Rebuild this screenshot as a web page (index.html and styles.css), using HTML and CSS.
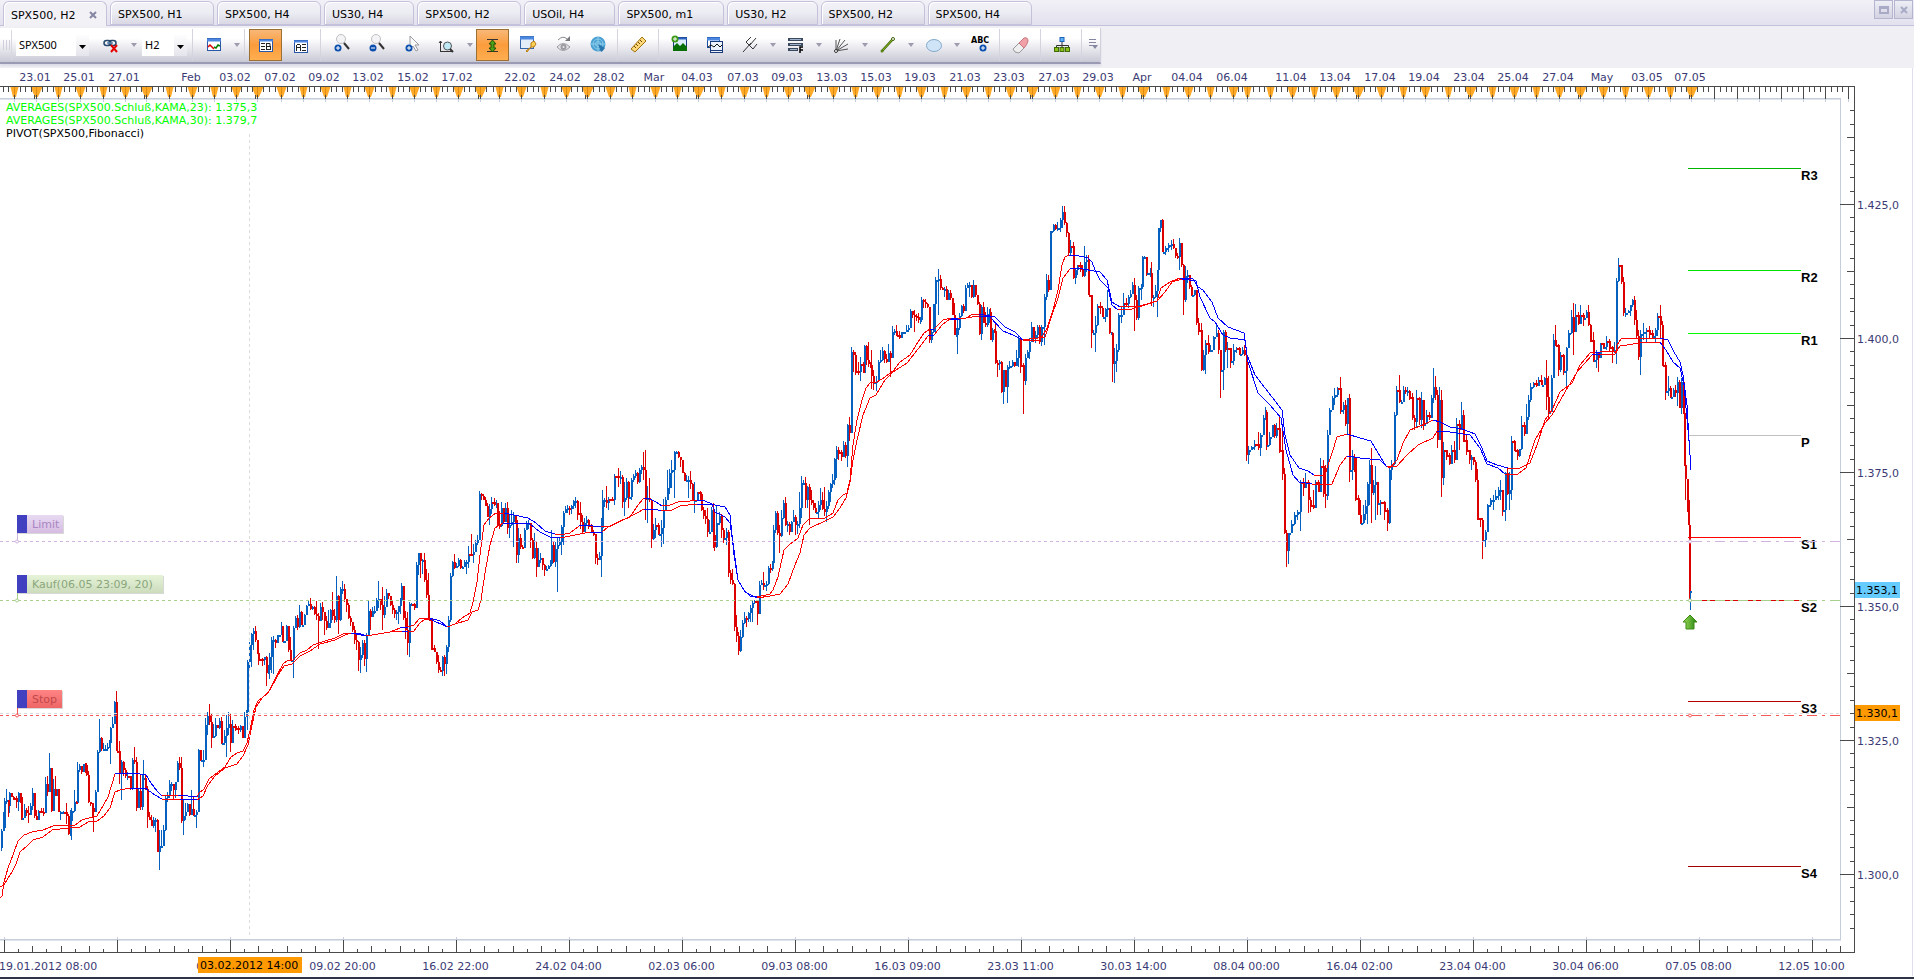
FILE: index.html
```
<!DOCTYPE html>
<html lang="de">
<head>
  <meta charset="UTF-8">
  <meta name="viewport" content="width=device-width, initial-scale=1.0">
  <title>SPX500, H2</title>
  <link rel="stylesheet" href="styles.css">
</head>
<body>

  <header class="tab-bar">
    <nav class="tabs">
      <button class="tab index active">SPX500, H2 <svg class="tab-close" viewBox="0 0 8 8"><path d="M1 1l6 6M7 1L1 7"/></svg></button>
      <button class="tab index">SPX500, H1</button>
      <button class="tab index">SPX500, H4</button>
      <button class="tab">US30, H4</button>
      <button class="tab index">SPX500, H2</button>
      <button class="tab">USOil, H4</button>
      <button class="tab index">SPX500, m1</button>
      <button class="tab">US30, H2</button>
      <button class="tab index">SPX500, H2</button>
      <button class="tab index">SPX500, H4</button>
    </nav>
    <div class="window-buttons">
      <button aria-label="Maximieren"><svg viewBox="0 0 10 10"><path d="M1 2h8v6H1z"/><path d="M1 3h8"/></svg></button>
      <button aria-label="Schließen"><svg viewBox="0 0 10 10"><path d="M2 2l6 6M8 2L2 8"/></svg></button>
    </div>
  </header>

  <div class="toolbar-row">
    <div class="toolbar">
      <span class="grip"></span>
      <span class="combo symbol">
        <select aria-label="Symbol"><option>SPX500</option><option>US30</option><option>USOil</option></select>
        <svg viewBox="0 0 13 20"><path d="M3 10h7l-3.500 4z"/></svg>
      </span>
      <button class="tool" aria-label="Verknüpfung"><svg viewBox="0 0 24 24">
        <g fill="none" stroke="#25476b" stroke-width="1.500"><rect x="5" y="7.500" width="7" height="5" rx="2.500"/><rect x="10" y="7.500" width="7" height="5" rx="2.500"/></g>
        <path d="M8 10h6" stroke="#5f86b0" stroke-width="1.500"/><path d="M12 12l6 7M18 12l-6 7" stroke="#e60000" stroke-width="2"/></svg></button>
      <button class="drop" aria-label="Mehr"></button>
      <span class="combo period">
        <select aria-label="Periode"><option>H2</option><option>H1</option><option>H4</option><option>m1</option></select>
        <svg viewBox="0 0 13 20"><path d="M3 10h7l-3.500 4z"/></svg>
      </span>
      <span class="sep wide"></span>
      <button class="tool" aria-label="Chart"><svg viewBox="0 0 24 24">
        <rect x="5.500" y="5.500" width="13" height="12" fill="#fff" stroke="#2a57a8"/><path d="M5 7h14" stroke="#4b86e0" stroke-width="3"/>
        <path d="M6 14l2-2 2 2 2 2" fill="none" stroke="#e00000" stroke-width="1.500"/><path d="M12 14l2 1 2-3 2 1" fill="none" stroke="#008000" stroke-width="1.500"/></svg></button>
      <button class="drop" aria-label="Mehr"></button>
      <span class="sep"></span>
      <button class="tool on" aria-label="Bid"><svg viewBox="0 0 24 24">
        <rect x="5.500" y="6.500" width="13" height="12" fill="#fff" stroke="#2a57a8"/><path d="M5 7.500h14" stroke="#4b86e0" stroke-width="2"/>
        <path d="M7 10.500h4M7 13.500h4M7 16.500h4M12.500 10v7M12 10.500h4v3h-4M16.500 13v4M12 16.500h4" fill="none" stroke="#222"/></svg></button>
      <button class="tool" aria-label="Ask"><svg viewBox="0 0 24 24">
        <rect x="5.500" y="7.500" width="13" height="12" fill="#fff" stroke="#2a57a8"/><path d="M5 8.500h14" stroke="#4b86e0" stroke-width="2"/>
        <path d="M7.500 18v-6M11.500 18v-6M8 11.500h3M8 14.500h3M13 11.500h4M13 14.500h4M13 17.500h4" fill="none" stroke="#222"/></svg></button>
      <span class="sep"></span>
      <button class="tool" aria-label="Vergrößern"><svg viewBox="0 0 24 24">
        <circle cx="11" cy="6" r="4.500" fill="#f4f4f6" stroke="#c0c0c4"/><path d="M14 10l5 6" stroke="#333" stroke-width="2"/>
        <circle cx="8" cy="15" r="3.500" fill="#0a4fae"/><path d="M6 15h4M8 13v4" stroke="#fff"/></svg></button>
      <button class="tool" aria-label="Verkleinern"><svg viewBox="0 0 24 24">
        <circle cx="11" cy="6" r="4.500" fill="#f4f4f6" stroke="#c0c0c4"/><path d="M14 10l5 6" stroke="#333" stroke-width="2"/>
        <circle cx="8" cy="15" r="3.500" fill="#0a4fae"/><path d="M6 15h4" stroke="#fff"/></svg></button>
      <button class="tool" aria-label="Zeiger"><svg viewBox="0 0 24 24">
        <path d="M10 3v13l3-3 3 5 2-1-3-5h4z" fill="#fafafa" stroke="#9a9aa0"/>
        <circle cx="9" cy="15" r="3.500" fill="#0a4fae"/><path d="M7 15h4M9 13v4" stroke="#fff"/></svg></button>
      <button class="tool" aria-label="Bereich"><svg viewBox="0 0 24 24">
        <path d="M5.500 8v10M4 10l1.500-2L7 10M5 18.500h13" fill="none" stroke="#333"/><circle cx="12.500" cy="13" r="4" fill="#bfeaf6" stroke="#555"/><path d="M15 16l3 3" stroke="#333" stroke-width="2"/></svg></button>
      <button class="drop" aria-label="Mehr"></button>
      <button class="tool on" aria-label="Skalieren"><svg viewBox="0 0 24 24">
        <path d="M6 6.500h11M6 18.500h11" stroke="#333"/><path d="M11.500 7l3.500 4h-2v4h2l-3.500 4L8 15h2v-4H8z" fill="#4ea01a" stroke="#1d5200"/></svg></button>
      <button class="tool" aria-label="Notiz"><svg viewBox="0 0 24 24">
        <rect x="4.500" y="3.500" width="13" height="12" fill="#e4eefa" stroke="#3765a8"/><path d="M4 5h14" stroke="#4b86e0" stroke-width="3"/>
        <path d="M10 18l5-4v-4l3-2 2 3-2 3h-3l-4 5z" fill="#ffd257" stroke="#b87a10"/></svg></button>
      <button class="tool" aria-label="Anzeigen"><svg viewBox="0 0 24 24">
        <path d="M6 14q6-7 13 0q-7 7-13 0z" fill="#e4e4e8" stroke="#9a9aa0"/><circle cx="12.500" cy="14" r="3" fill="#9a9aa0"/><circle cx="12.500" cy="14" r="1" fill="#eee"/>
        <path d="M7 7q5-5 9-1" fill="none" stroke="#85858c"/><path d="M14 8h5V3z" fill="#77777e"/></svg></button>
      <button class="tool" aria-label="Web"><svg viewBox="0 0 24 24">
        <circle cx="12" cy="11" r="7.500" fill="#4aa0d2"/><g fill="none" stroke="#8ccdea"><circle cx="12" cy="11" r="5"/><circle cx="12" cy="11" r="2.500"/><path d="M12 4v14M5 11h14"/></g><path d="M12 11l7 4q-2 3-4 4z" fill="#2875ae"/></svg></button>
      <span class="sep"></span>
      <button class="tool" aria-label="Lineal"><svg viewBox="0 0 24 24">
        <path d="M4 16L15 4l4 4L8 19z" fill="#ffd979" stroke="#a0720e"/><path d="M7 13l2 2M9 11l2 2M11 9l2 2M13 7l2 2" stroke="#704c00"/></svg></button>
      <span class="sep"></span>
      <button class="tool" aria-label="Bild"><svg viewBox="0 0 24 24">
        <rect x="5.500" y="4.500" width="13" height="13" fill="#dceefc" stroke="#173a78"/><path d="M5 5.500h14" stroke="#2e62c0" stroke-width="2"/><path d="M5 18v-4l4-4 3 3 3-3 4 4v4z" fill="#067006"/>
        <circle cx="7" cy="6" r="3.500" fill="#3c9a18"/><path d="M5 6h4M7 4v4" stroke="#fff"/></svg></button>
      <button class="tool" aria-label="Fenster"><svg viewBox="0 0 24 24">
        <rect x="4.500" y="4.500" width="12" height="10" fill="#fff" stroke="#1d4e9e"/><path d="M4 6h13" stroke="#4b86e0" stroke-width="3"/><rect x="7.500" y="8.500" width="12" height="11" fill="#eef2fb" stroke="#19397a"/>
        <path d="M5 14l3-2 3 2 3-3 3 3 2-2" fill="none" stroke="#111"/><path d="M8 17.500h11" stroke="#19397a"/></svg></button>
      <button class="tool" aria-label="Pitchfork"><svg viewBox="0 0 24 24">
        <path d="M5 19l8-9M8 9l7 7M8 9l5-5M11.500 12.500L18 5M15 16l4-5" fill="none" stroke="#333"/></svg></button>
      <button class="drop" aria-label="Mehr"></button>
      <button class="tool" aria-label="Fibonacci"><svg viewBox="0 0 24 24">
        <path d="M4 6.500h15M4 11.500h15M4 16.500h10" stroke="#3c4a60" stroke-width="3"/><path d="M6 6.500h11M6 11.500h11M6 16.500h7" stroke="#9fb2cc"/><path d="M16 20v-6h3M16 17h3" fill="none" stroke="#000" stroke-width="1.500"/></svg></button>
      <button class="drop" aria-label="Mehr"></button>
      <button class="tool" aria-label="Fächer"><svg viewBox="0 0 24 24">
        <path d="M6 18V7M6 18l4-12M6 18l9-11M6 18l12-7M6 18l12-2" stroke="#555"/><circle cx="6" cy="18" r="1.500" fill="#fff" stroke="#333"/></svg></button>
      <button class="drop" aria-label="Mehr"></button>
      <button class="tool" aria-label="Linie"><svg viewBox="0 0 24 24">
        <path d="M6 18L17 6" stroke="#3d6208" stroke-width="2.500"/><path d="M6 18L17 6" stroke="#92c820"/><circle cx="6" cy="18" r="1.500" fill="#5c8614"/><circle cx="17" cy="6" r="1.500" fill="#fff" stroke="#3d6208"/></svg></button>
      <button class="drop" aria-label="Mehr"></button>
      <button class="tool" aria-label="Ellipse"><svg viewBox="0 0 24 24"><ellipse cx="12" cy="12.500" rx="7.500" ry="6" fill="#cfe4f6" stroke="#85a9ca"/></svg></button>
      <button class="drop" aria-label="Mehr"></button>
      <button class="tool" aria-label="Text"><svg viewBox="0 0 24 24">
        <text class="abc" x="3" y="10">ABC</text><circle cx="15" cy="15" r="3.500" fill="#0a4fae"/><path d="M13 15h4M15 13v4" stroke="#fff"/></svg></button>
      <span class="sep"></span>
      <button class="tool" aria-label="Radierer"><svg viewBox="0 0 24 24">
        <path d="M4 16l6-6 5 5-5 5q-5 0-6-4z" fill="#eeeeee" stroke="#98989c"/><path d="M10 10l5-5q4-1 4 3-1 4-4 7z" fill="#f0a0a6" stroke="#c7747c"/></svg></button>
      <span class="sep"></span>
      <button class="tool" aria-label="Struktur"><svg viewBox="0 0 24 24">
        <path d="M12 9v5M6.500 15v-2.500h12V15" fill="none" stroke="#333"/><rect x="10" y="4.500" width="4" height="4" fill="#5fb2ff" stroke="#1a63b5"/>
        <g fill="#8ec01a" stroke="#3f6a08"><rect x="4.500" y="14.500" width="4" height="4"/><rect x="10" y="14.500" width="4" height="4"/><rect x="15.500" y="14.500" width="4" height="4"/></g></svg></button>
      <span class="sep"></span>
      <button class="overflow" aria-label="Weitere Symbole"><svg viewBox="0 0 10 12"><path d="M1 1.500h7M1 4.500h7M1 7.500h4" stroke="#8486a2"/><path d="M4 7h6l-3 4z" fill="#8486a2"/></svg></button>
    </div>
  </div>

  <main class="chart">
    <svg id="chart" viewBox="0 68 1914 909" role="img" aria-label="SPX500, H2">
      <defs>
        <linearGradient id="limitFill" x2="0" y2="1"><stop stop-color="#e8daf2"/><stop offset="1" stop-color="#d6bce2"/></linearGradient>
        <linearGradient id="buyFill" x2="0" y2="1"><stop stop-color="#e6f3d8"/><stop offset="1" stop-color="#ccdcbc"/></linearGradient>
        <linearGradient id="stopFill" x2="0" y2="1"><stop stop-color="#ff8484"/><stop offset="1" stop-color="#ee6666"/></linearGradient>
        <linearGradient id="arrowFill"><stop stop-color="#a4e05a"/><stop offset="1" stop-color="#1f8010"/></linearGradient>
      </defs>
      <g id="frame"></g>
      <g id="bars"></g>
      <g id="pivots"></g>
      <g id="averages"></g>
      <g id="orders"></g>
      <g id="axes"></g>
      <path class="signal" d="M1690 615l7 7h-3v7h-8v-7h-3z"/>
      <g class="legend">
        <text class="kama" x="6" y="111">AVERAGES(SPX500.Schluß,KAMA,23): 1.375,3</text>
        <text class="kama" x="6" y="124">AVERAGES(SPX500.Schluß,KAMA,30): 1.379,7</text>
        <text x="6" y="137">PIVOT(SPX500,Fibonacci)</text>
      </g>
    </svg>
  </main>
  <footer class="status-edge"></footer>

  <script src="chart.js"></script>
</body>
</html>
```
FILE: styles.css
```
* {
  box-sizing: border-box;
}

body {
  margin: 0;
  height: 100vh;
  display: flex;
  flex-direction: column;
  overflow: hidden;
  background-color: #fff;
  font-family: "DejaVu Sans", Verdana, sans-serif;
  font-size: 11px;
  color: #000;
}

button {
  font: inherit;
  color: inherit;
  border: none;
  background: none;
  padding: 0;
}

/* tabs */
.tab-bar {
  display: flex;
  justify-content: space-between;
  height: 26px;
  padding-left: 3px;
  background: linear-gradient(#f2f1f7, #e2e1ee);
  border-bottom: 1px solid #c2c0dc;
}

.tabs {
  display: flex;
  gap: 3px;
  padding-top: 1px;
}

.tab {
  display: flex;
  align-items: center;
  min-width: 90px;
  height: 24px;
  padding: 2px 30px 0 7px;
  border: 1px solid #c4c2da;
  border-radius: 6px 6px 0 0;
  background: linear-gradient(#f3f2f8, #ececf3 50%, #d9d8e4);
  box-shadow: inset 1px 1px #fff;
  white-space: nowrap;
}

.tab.index {
  min-width: 104px;
}

.tab.active {
  height: 25px;
  padding-right: 7px;
  border-bottom: none;
  background: #f2f1f6;
}

.tab-close {
  width: 8px;
  height: 8px;
  margin-left: 14px;
  fill: none;
  stroke: #8486a2;
  stroke-width: 2;
}

.window-buttons {
  display: flex;
  gap: 1px;
  padding-right: 1px;
}

.window-buttons button {
  width: 19px;
  height: 19px;
  border: 1px solid #b4b6d0;
  background: linear-gradient(#eeeef6, #d2d2e2);
}

.window-buttons svg {
  display: block;
  width: 10px;
  height: 10px;
  margin: 0 auto;
  fill: none;
  stroke: #a8aac6;
  stroke-width: 2;
}

/* toolbar */
.toolbar-row {
  height: 42px;
  padding-top: 2px;
  background-color: #f0eff4;
}

.toolbar {
  display: flex;
  align-items: center;
  width: max-content;
  height: 36px;
  background: linear-gradient(#fff 30%, #f0f0f4 50%, #c9c9d6);
  border-bottom: 2px solid #9a9ab4;
  border-right: 1px solid #d0d0de;
  box-shadow: 0 2px 2px #dcdce6;
}

.grip {
  width: 12px;
  height: 30px;
  margin-right: 4px;
  border-right: 1px solid #d8d8e2;
}

.grip::before {
  content: "";
  display: block;
  width: 7px;
  height: 10px;
  margin: 10px 0 0 3px;
  background: repeating-linear-gradient(90deg, #d0d0dc 0 1px, transparent 1px 3px);
}

.combo {
  display: flex;
  height: 22px;
  background-color: #fff;
}

.combo.symbol {
  width: 73px;
  margin-right: 4px;
}

.combo.period {
  width: 45px;
  margin-left: 3px;
}

.combo select {
  flex: 1;
  min-width: 0;
  padding: 0 0 2px 3px;
  border: none;
  appearance: none;
  background: #fff;
  color: #000;
  font-family: "Noto Sans", sans-serif;
  font-size: 11px;
}

.combo svg {
  width: 13px;
  background: linear-gradient(#fff, #e4e4ec);
}

.sep {
  width: 6px;
  height: 32px;
  background: linear-gradient(#d4d4de, #d4d4de) 2px 0 / 1px 100% no-repeat;
}

.sep.wide {
  margin-left: 3px;
}

.tool {
  width: 33px;
  height: 32px;
  margin: 0 1px;
}

.tool svg {
  display: block;
  width: 24px;
  height: 24px;
  margin: 0 auto;
}

.tool.on {
  border: 1px solid #9c7032;
  background: linear-gradient(#f8b878, #fb9c3c 50%, #ffae50);
}

.abc {
  font-family: "DejaVu Sans", sans-serif;
  font-size: 8px;
  font-weight: bold;
}

.drop {
  width: 11px;
  height: 32px;
}

.drop::before {
  content: "";
  display: block;
  width: 0;
  margin: 0 auto;
  border: 3px solid transparent;
  border-top: 4px solid #9c9cae;
  border-bottom: none;
}

.overflow {
  width: 15px;
  height: 32px;
}

.overflow svg {
  width: 10px;
  height: 12px;
}

/* chart */
.chart {
  flex: 1;
  min-height: 0;
}

.chart > svg {
  display: block;
  width: 100%;
  height: 100%;
}

.lines {
  fill: none;
  shape-rendering: crispEdges;
}

.kama {
  fill: #00ff00;
}

.axis {
  stroke: #4a4a4a;
}

.grid {
  stroke: #c6cedb;
}

.edge {
  stroke: #dedeee;
}

.axis-label {
  fill: #3a3a74;
}

.middle {
  text-anchor: middle;
}

.up { fill: #0560c0; }
.down { fill: #dc0000; }
.rising { stroke: #ff0000; }
.falling { stroke: #0000ff; }
.session { fill: #ffa928; }

.pivot-label {
  font-family: "Liberation Sans", Arial, sans-serif;
  font-size: 13px;
  font-weight: bold;
}

.signal {
  fill: url(#arrowFill);
  stroke: #3c8c14;
}

.status-edge {
  height: 2px;
  background-color: #2e3446;
}
```
FILE: chart.js
```
var NS = 'http://www.w3.org/2000/svg';

function add(parent, name, attrs, text) {
  var el = document.createElementNS(NS, name);
  for (var key in attrs) {
    el.setAttribute(key, attrs[key]);
  }
  if (text) {
    el.textContent = text;
  }
  document.getElementById(parent).appendChild(el);
  return el;
}

function line(parent, d, attrs) {
  attrs.d = d;
  attrs['class'] = 'lines ' + (attrs['class'] || '');
  add(parent, 'path', attrs);
}

// x close high low, the open is the close of the bar before
var bars = `
1 831 829 851;3 828 812 830;4 801 798 829;6 800 789 804;8 806 800 817;9 793 792 813;11 797 793 797;13 798 796 800;16 802 796 808;18 793 792 811;
20 797 793 803;21 818 796 820;24 810 804 818;26 813 808 816;28 815 806 823;30 806 803 812;32 793 788 810;34 816 795 818;36 820 810 820;38 811 810 820;
41 812 808 812;43 813 808 816;45 784 777 812;47 792 776 796;49 768 753 792;51 811 768 812;53 789 779 811;55 796 776 796;57 789 789 796;58 812 796 812;
60 812 811 820;63 812 811 813;66 816 803 824;68 834 814 835;70 821 810 836;71 811 808 840;74 802 790 812;76 803 801 803;77 770 762 802;79 766 764 772;
81 772 767 774;83 764 764 772;85 765 763 773;86 775 763 776;88 802 771 803;90 803 803 806;92 808 803 818;93 812 804 832;95 792 790 812;97 752 750 792;
99 738 719 753;101 749 737 751;103 749 743 751;105 749 745 749;107 747 743 751;109 743 740 748;110 728 727 764;112 724 717 728;114 702 701 724;116 751 691 751;
119 774 741 784;121 762 760 800;123 770 761 776;125 776 768 778;127 776 772 780;130 789 776 790;132 760 758 790;134 762 747 764;136 808 757 811;138 791 788 808;
140 807 775 810;142 778 775 810;143 778 760 782;145 789 775 790;147 817 786 828;149 820 812 820;151 826 815 826;153 820 817 828;155 820 818 832;157 852 819 852;
159 846 830 870;161 846 830 847;163 830 825 846;165 798 795 831;167 796 792 802;169 784 780 798;171 784 782 791;173 790 785 800;175 782 782 798;177 763 761 782;
179 768 757 770;181 821 757 823;183 816 800 835;185 812 803 820;187 804 803 810;189 815 805 816;191 809 790 815;193 815 797 816;196 812 810 828;198 750 749 812;
200 760 750 761;203 760 750 767;205 725 718 760;207 716 712 735;209 722 704 725;211 738 714 748;213 736 724 738;215 725 718 737;217 728 725 728;219 721 718 729;
221 743 717 744;224 736 730 745;226 728 715 757;228 724 712 735;230 743 713 752;232 726 720 734;235 728 724 731;238 730 726 734;240 726 725 732;242 738 726 738;
244 717 712 738;246 712 710 713;247 662 660 730;249 645 642 670;251 634 633 667;253 631 628 650;255 640 626 642;257 653 640 654;258 659 650 665;262 660 658 666;
264 657 657 665;266 673 656 686;268 670 665 674;269 657 653 679;271 640 637 673;273 640 636 674;275 643 639 648;277 635 635 643;281 626 622 634;282 641 628 642;
286 626 625 640;288 650 633 652;290 660 637 660;293 628 626 678;295 618 616 628;297 627 615 630;299 612 605 628;301 625 611 625;304 615 614 625;306 606 605 615;
308 604 600 606;310 609 598 610;312 607 606 610;314 614 606 615;316 616 601 620;318 621 613 649;320 607 603 620;322 612 602 620;324 621 612 635;326 628 616 630;
328 623 610 627;330 610 609 628;332 616 592 620;334 620 609 623;336 596 576 622;338 620 595 634;340 589 587 621;342 589 581 594;344 599 584 602;346 605 599 612;
348 618 603 619;350 622 616 626;352 630 622 632;354 640 626 644;356 642 634 650;358 660 641 671;360 655 647 673;362 643 640 658;364 659 640 666;366 636 633 672;
368 611 601 630;370 617 609 630;372 611 607 616;374 611 606 614;376 600 598 608;378 599 581 608;380 605 600 610;382 615 587 630;384 607 596 618;386 593 589 607;
388 596 593 599;390 605 596 606;392 610 601 614;394 614 608 618;396 612 610 620;398 606 606 624;400 600 598 614;401 586 583 606;403 618 586 620;405 630 611 639;
407 643 612 655;409 604 602 657;411 604 603 605;414 608 603 610;416 565 562 608;418 553 553 575;420 561 553 578;422 560 559 574;424 580 553 582;426 595 569 598;
428 619 573 619;431 648 628 650;434 652 645 652;436 662 652 664;438 670 655 673;440 671 667 672;442 657 656 676;444 664 655 676;446 647 645 674;448 620 616 652;
450 576 573 622;452 562 561 577;454 568 554 569;456 566 563 568;458 560 558 567;460 568 559 569;462 567 566 568;464 562 560 567;466 562 560 574;468 554 546 568;
471 555 534 556;473 552 544 563;475 543 540 552;477 540 535 545;479 494 491 540;481 496 493 500;483 500 494 500;485 506 497 506;487 517 503 517;489 509 504 525;
491 502 497 514;494 505 498 506;496 503 500 508;497 525 503 527;499 526 511 529;501 508 502 527;503 522 514 524;505 508 503 513;507 528 502 534;509 525 514 538;
511 522 510 526;513 516 512 547;515 520 515 524;516 555 518 563;518 538 528 563;520 547 534 549;522 548 545 549;524 530 528 548;526 523 521 530;528 523 520 529;
530 540 523 548;532 558 538 559;534 548 533 559;536 567 541 577;538 560 548 567;540 558 553 563;542 565 558 570;544 570 564 576;546 569 566 571;548 566 565 568;
550 564 560 567;551 545 530 564;553 562 541 563;555 549 542 567;557 545 538 592;559 542 538 546;561 527 525 555;563 513 511 545;565 509 506 513;567 508 505 513;
569 509 506 515;571 506 505 514;573 501 500 509;575 501 497 508;577 513 500 520;580 522 502 529;582 532 515 533;584 523 518 530;586 520 516 525;588 525 519 529;
591 533 524 533;593 534 530 536;595 558 534 564;597 560 554 565;599 556 552 560;601 528 518 577;602 500 490 528;604 500 498 507;606 503 486 508;608 499 497 510;
612 500 497 500;614 476 474 505;618 478 468 487;620 477 471 484;622 502 475 508;624 498 482 516;626 482 478 500;628 497 481 508;631 480 478 500;633 476 474 482;
635 473 470 478;637 482 472 484;639 470 468 483;641 467 465 474;643 470 452 480;645 500 450 520;647 498 486 523;649 500 478 502;651 539 499 548;653 530 524 540;
655 525 518 538;658 534 523 535;661 528 520 547;663 510 499 544;665 500 497 510;667 488 470 500;669 473 469 494;671 470 460 488;674 452 451 498;676 452 451 453;
678 457 451 458;680 460 457 467;682 473 464 473;684 481 472 481;686 480 475 481;688 480 476 498;690 484 471 489;692 500 483 500;694 500 482 513;697 492 492 501;
700 494 491 500;701 510 493 511;703 516 507 519;705 519 510 524;707 532 508 537;709 532 520 533;711 510 507 532;713 535 503 548;714 547 532 551;716 523 505 548;
719 516 512 525;721 530 514 538;723 538 528 543;726 532 528 545;728 573 530 577;730 580 570 584;732 584 569 585;734 627 583 631;736 636 615 642;738 651 632 655;
740 637 630 652;742 623 620 638;744 618 612 624;746 619 616 627;748 613 612 622;750 608 605 622;752 603 601 622;754 601 600 604;757 614 600 625;759 585 581 614;
761 583 580 585;763 585 572 590;766 584 581 591;768 568 566 585;770 569 564 573;772 563 561 571;773 530 525 563;775 513 511 533;777 533 511 535;779 536 525 553;
781 518 510 537;783 503 500 519;785 525 497 526;787 524 521 532;789 532 522 535;791 522 521 532;793 517 510 522;795 525 515 535;797 524 521 534;799 508 492 528;
801 483 476 518;803 483 480 485;805 500 477 508;807 487 486 508;809 500 484 525;811 503 490 505;813 508 500 510;815 512 503 513;818 505 501 518;820 500 488 510;
822 509 492 510;824 512 487 516;826 506 501 522;828 492 490 509;830 484 483 502;832 480 474 488;834 459 458 485;836 450 446 478;838 452 447 460;841 457 450 461;
843 445 441 457;845 456 442 458;847 425 424 467;849 433 417 441;851 352 347 433;853 355 350 372;855 371 352 375;858 372 362 375;860 364 357 381;863 373 362 373;
864 346 345 372;866 360 345 365;868 364 342 367;870 365 362 368;871 376 350 389;873 382 370 390;876 381 376 391;878 362 360 382;880 360 350 363;882 351 347 361;
884 359 350 363;886 362 354 363;888 353 344 362;890 358 351 377;892 332 326 358;894 331 329 335;896 335 325 336;899 338 331 339;901 332 332 338;904 332 332 334;
906 330 325 332;908 328 325 332;910 311 309 328;912 315 311 318;914 316 310 332;916 317 314 321;918 320 313 323;920 320 317 324;921 300 297 320;923 302 299 308;
925 304 299 308;927 307 303 308;929 340 307 343;931 332 330 343;933 304 304 333;935 280 277 333;938 279 269 315;940 288 275 290;942 289 287 290;944 289 287 297;
946 300 286 300;948 293 290 300;950 298 290 300;952 315 298 315;954 335 303 335;956 335 328 336;957 328 320 354;959 316 313 330;961 306 305 317;963 311 304 313;
965 288 285 311;967 285 283 288;969 285 282 297;971 297 285 298;973 285 280 298;975 295 285 297;977 304 295 305;979 334 302 335;981 307 305 340;983 323 302 323;
985 325 312 327;987 314 307 327;989 312 309 323;990 340 308 340;992 330 328 342;994 331 329 333;995 363 323 364;997 364 360 377;999 362 360 370;1001 392 361 393;
1003 370 370 404;1005 387 370 387;1007 367 365 403;1009 366 361 369;1012 362 360 367;1014 366 362 367;1016 358 350 365;1018 338 336 367;1020 365 338 373;1023 381 363 414;
1025 358 354 385;1027 352 350 358;1029 342 338 359;1031 327 322 342;1033 338 327 342;1035 335 331 343;1037 327 325 338;1039 342 325 344;1041 327 325 346;1044 297 294 345;
1046 280 274 300;1048 290 275 292;1050 231 231 290;1053 225 224 232;1055 229 224 230;1057 228 222 231;1060 220 218 232;1062 212 206 228;1064 223 206 225;1066 233 222 237;
1068 253 232 255;1070 246 240 255;1073 278 242 279;1075 270 268 284;1077 265 265 275;1080 270 262 272;1082 276 265 277;1084 262 246 277;1086 260 255 272;1088 295 255 295;
1091 333 295 348;1093 333 330 334;1095 325 316 352;1097 306 304 326;1100 308 302 314;1102 317 306 317;1105 309 308 322;1107 308 290 317;1109 333 308 334;1111 333 332 335;
1112 364 332 382;1114 361 348 383;1116 350 344 372;1118 315 313 352;1121 315 306 323;1123 303 293 315;1126 304 298 306;1128 297 295 308;1130 294 290 298;1132 285 282 294;
1134 300 278 331;1136 318 295 320;1138 288 286 320;1141 287 284 300;1142 257 256 288;1144 257 256 259;1146 273 260 276;1150 273 268 277;1151 298 262 306;1153 297 295 307;
1155 291 285 298;1157 270 270 317;1158 228 228 278;1160 220 220 232;1162 252 219 252;1165 248 246 255;1168 245 243 252;1171 244 240 250;1173 248 239 249;1175 256 250 258;
1177 257 253 259;1179 243 238 270;1181 265 244 267;1183 300 264 315;1185 276 266 302;1187 275 270 283;1189 287 275 289;1191 295 285 296;1194 290 290 296;1196 323 290 325;
1198 330 318 335;1201 370 323 371;1203 355 350 371;1205 343 340 374;1208 352 335 354;1210 350 345 352;1213 337 336 350;1216 333 325 337;1218 350 330 354;1220 370 350 398;
1223 332 330 390;1225 350 330 352;1227 348 342 368;1230 361 349 368;1233 350 344 365;1236 348 347 353;1239 354 347 355;1242 350 347 355;1244 355 345 356;1246 455 355 461;
1248 450 446 464;1251 447 446 449;1254 444 440 450;1258 448 432 450;1260 435 433 456;1263 418 415 435;1265 412 407 420;1266 445 410 450;1269 437 432 446;1272 425 425 436;
1274 436 424 438;1276 428 423 438;1279 450 417 453;1282 474 430 480;1284 533 468 534;1286 551 530 567;1288 533 533 564;1291 524 520 533;1294 515 512 525;1297 512 510 520;
1300 482 480 531;1303 488 478 496;1305 482 473 488;1308 500 480 513;1310 505 497 512;1313 508 490 509;1315 482 480 508;1318 492 480 492;1320 466 458 492;1323 494 460 497;
1325 496 465 508;1327 435 430 500;1329 410 408 435;1332 398 396 410;1334 395 388 405;1337 388 387 397;1340 410 377 414;1343 405 402 414;1345 424 400 426;1347 398 398 435;
1349 470 394 482;1352 457 450 480;1354 458 454 472;1355 498 458 501;1358 515 495 515;1360 523 500 524;1363 514 505 524;1365 506 500 520;1367 484 482 524;1369 465 460 505;
1371 493 448 523;1373 485 480 495;1375 482 466 520;1377 503 482 515;1380 502 500 515;1384 510 501 520;1387 523 508 531;1389 470 468 524;1391 464 460 480;1394 415 412 465;
1396 390 386 416;1399 402 375 403;1401 402 400 404;1403 390 386 402;1405 391 387 394;1407 391 387 396;1409 397 390 400;1412 418 393 420;1414 422 415 430;1416 398 390 428;
1419 420 397 425;1421 400 392 428;1423 424 400 430;1426 415 410 422;1429 418 412 420;1431 398 395 418;1433 387 368 403;1435 395 376 400;1437 440 390 448;1439 400 387 440;
1441 478 390 497;1443 450 442 485;1446 455 450 460;1449 464 453 465;1451 450 445 463;1454 460 441 463;1456 424 418 460;1459 430 420 450;1461 415 402 430;1463 440 410 442;
1466 450 435 455;1469 460 452 464;1471 457 455 470;1473 462 458 465;1475 480 460 482;1477 518 469 520;1480 520 518 527;1482 540 518 559;1485 532 530 547;1487 505 504 532;
1490 500 498 507;1493 500 495 510;1495 496 490 500;1498 490 487 500;1500 490 480 500;1502 510 491 516;1505 473 472 521;1507 494 468 495;1509 490 472 510;1511 441 436 500;
1514 450 440 451;1517 456 449 460;1519 449 449 457;1521 425 416 450;1524 434 422 436;1526 417 404 434;1528 400 395 420;1530 387 383 402;1533 383 382 388;1536 386 380 387;
1538 380 377 386;1541 385 375 385;1544 378 377 385;1546 397 360 410;1548 412 376 419;1551 378 375 412;1553 340 334 378;1555 345 325 346;1558 370 344 376;1560 355 352 372;
1563 371 354 375;1566 348 347 390;1568 333 330 348;1571 317 310 334;1573 332 303 355;1575 315 304 332;1578 324 312 325;1580 315 305 324;1583 318 313 326;1586 312 310 318;
1588 325 305 326;1590 340 324 342;1593 360 332 362;1596 352 350 368;1598 358 352 372;1600 343 343 358;1603 347 343 349;1606 341 336 350;1609 347 339 352;1612 352 346 363;
1614 350 342 353;1616 281 278 364;1618 265 258 282;1621 282 265 284;1623 313 277 316;1625 313 308 317;1628 311 310 313;1630 305 305 316;1632 300 299 307;1634 320 296 325;
1636 336 310 338;1638 357 330 360;1640 334 330 375;1643 332 323 340;1646 330 328 343;1649 333 326 339;1652 336 330 339;1655 330 328 342;1657 316 313 336;1660 325 305 338;
1662 365 321 366;1665 391 362 400;1668 388 376 396;1670 397 386 398;1673 390 388 397;1675 393 385 397;1677 382 377 406;1679 408 380 408;1681 382 378 414;1683 413 382 414;
1684 465 410 466;1685 479 464 500;1687 500 489 512;1688 525 489 525;1689 591 524 600;1690 591 590 610`;

// r = rising part, f = falling part
var averages = [
  'r 0,898 2,896 4,882 8,868 13,855 18,841 24,835 32,832 43,830 53,826 65,825 75,825 82,820 92,817 97,816 103,806 108,797 112,784 115,774 f 133,773 146,775 151,783 157,791 162,796 r 178,795 f 197,797 r 199,793 204,789 209,779 217,773 225,767 231,757 237,753 243,751 247,743 250,730 254,710 258,701 268,693 275,679 283,664 288,660 293,660 300,653 307,650 313,645 325,641 335,638 345,633 351,633 f 359,633 366,636 r 390,632 400,628 f 408,627 r 414,625 419,619 425,618 430,618 f 440,621 447,627 r 455,624 462,618 470,613 473,602 477,582 480,555 484,525 489,518 496,513 504,513 f 514,515 528,518 536,523 545,531 555,534 r 560,535 570,533 579,526 f 585,525 601,527 r 611,526 620,521 630,517 638,505 644,498 f 650,499 656,502 662,506 r 670,505 678,502 690,501 697,500 f 705,501 712,504 715,512 725,517 730,523 734,550 738,580 744,590 750,596 757,597 r 770,594 773,590 778,577 784,550 789,545 798,538 803,525 809,519 825,518 833,513 838,500 843,495 847,493 850,480 853,445 857,420 862,400 866,388 870,383 877,382 885,377 893,371 900,362 910,355 918,342 924,333 930,329 f 934,329 r 943,320 951,318 f 958,318 r 966,318 973,314 979,314 f 995,317 1005,327 1015,332 1023,340 r 1040,340 1047,328 1053,310 1058,290 1062,265 1065,257 1069,255 f 1075,255 1088,258 1092,262 1095,270 1100,280 1108,288 1112,305 1118,310 r 1132,309 1140,306 1157,301 1161,288 1170,282 1180,278 f 1193,279 1198,287 1203,290 1212,302 1218,318 1228,327 1244,333 1247,355 1255,375 1265,388 1272,397 1282,410 1285,435 1290,455 1299,468 1308,471 1314,475 r 1325,475 1328,465 1333,450 1337,437 1347,434 f 1360,438 1371,441 1378,453 1386,466 r 1390,468 1397,460 1403,443 1410,430 1425,424 1433,420 f 1440,422 1450,427 1462,429 1475,434 1482,448 1487,461 1497,465 1508,468 r 1520,468 1530,463 1537,445 1545,420 1552,410 1560,392 1572,383 1580,365 1590,353 1595,352 f 1600,352 r 1616,351 1617,345 1621,339 1635,338 1660,338 f 1668,340 1674,352 1680,362 1683,375 1687,405 1689,440 1691,470',
  'r 0,887 4,885 8,878 12,872 16,864 20,852 27,846 33,840 43,837 52,830 68,828 80,827 88,822 97,821 104,816 110,808 115,792 120,790 130,788 f 145,788 155,795 162,799 r 180,799 f 197,800 r 203,796 208,785 215,776 225,768 237,764 243,756 248,745 252,725 256,707 262,698 270,690 278,675 284,666 292,664 300,656 310,651 320,644 335,640 345,635 351,633 f 366,636 r 390,632 402,631 f 408,631 r 414,631 420,623 425,619 430,619 f 447,627 r 455,624 468,620 472,612 478,610 481,600 485,573 490,545 495,528 503,523 f 512,523 530,524 540,532 550,537 560,538 r 575,535 590,532 f 602,532 r 608,527 625,519 637,513 644,509 f 655,509 661,511 r 672,510 680,506 697,504 f 715,505 725,507 730,515 734,555 738,580 745,592 757,598 r 770,596 780,594 788,584 795,565 800,553 804,535 810,528 825,521 833,517 840,508 846,498 850,482 853,460 857,440 863,415 870,398 876,395 885,380 893,372 907,363 918,349 928,336 f 934,335 r 942,325 950,319 f 960,319 r 966,318 979,316 f 990,317 1003,331 1013,335 1023,340 r 1045,337 1052,315 1058,298 1063,278 1070,269 f 1077,268 1100,272 1107,280 1112,302 1120,307 r 1135,306 1142,306 1157,301 1165,292 1172,282 1182,279 f 1196,281 1200,297 1210,318 1215,322 1223,335 1230,338 1245,340 1248,362 1258,393 1270,405 1281,418 1286,450 1293,475 1299,482 1312,484 r 1332,484 1340,465 1347,456 f 1360,458 1380,460 1387,467 r 1397,466 1407,455 1418,445 1433,438 1437,431 f 1450,432 1470,435 1480,448 1487,464 1498,468 1505,474 r 1518,474 1526,468 1535,440 1545,423 1552,415 1565,392 1577,372 1592,355 f 1600,354 r 1615,354 1620,346 1640,343 1660,342 f 1666,350 1673,362 1680,368 1684,385 1688,430 1690,452'
];

function drawBars() {
  var last = 848;
  var lastX = 0;
  var paths = { up: '', down: '' };
  bars.trim().split(';').forEach(function (row) {
    var v = row.trim().split(' ').map(Number);
    var x = v[0];
    var top = Math.min(last, v[1]);
    var height = Math.max(2, Math.abs(v[1] - last));
    var side = v[1] <= last ? 'up' : 'down';
    paths[side] += 'M' + x + ' ' + v[2] + 'h1V' + v[3] + 'h-1z';
    paths[side] += 'M' + x + ' ' + top + 'h2v' + height + 'h-2z';
    if (x - lastX > 2) {
      paths[side] += 'M' + (lastX + 1) + ' ' + last + 'H' + x + 'v2H' + (lastX + 1) + 'z';
    }
    last = v[1];
    lastX = x;
  });
  add('bars', 'path', { 'class': 'up', 'fill-rule': 'nonzero', 'shape-rendering': 'crispEdges', d: paths.up });
  add('bars', 'path', { 'class': 'down', 'fill-rule': 'nonzero', 'shape-rendering': 'crispEdges', d: paths.down });
}

function drawAverages() {
  averages.forEach(function (data) {
    var kind = 'r';
    var prev = '';
    var d = { r: '', f: '' };
    data.split(' ').forEach(function (token) {
      if (token === 'r' || token === 'f') {
        kind = token;
        d[kind] += prev ? 'M' + prev : '';
        return;
      }
      d[kind] += (d[kind] ? 'L' : 'M') + token;
      prev = token;
    });
    line('averages', d.r, { 'class': 'rising' });
    line('averages', d.f, { 'class': 'falling' });
  });
}

function drawPivots() {
  [['R3', 168, '#00b400'], ['R2', 270, '#00e000'], ['R1', 333, '#00ff00'], ['P', 435, '#c0c0c0'],
    ['S1', 537, '#ff0000'], ['S2', 600, '#dc0000'], ['S3', 701, '#b40000'], ['S4', 866, '#a00000']].forEach(function (p) {
    line('pivots', 'M1688 ' + (p[1] + 0.5) + 'H1801', { stroke: p[2] });
    add('pivots', 'text', { 'class': 'pivot-label', x: 1801, y: p[1] + 12 }, p[0]);
  });
}

function drawOrders() {
  line('orders', 'M249.5 134V938M0 713.5H1840', { stroke: '#dcdcdc', 'stroke-dasharray': '3 3' });
  [['Limit', 541, 515, 46, '#d2b4e0', 'url(#limitFill)', '#a886c4'],
    ['Kauf(06.05 23:09, 20)', 600, 575, 146, '#a8cf8c', 'url(#buyFill)', '#8aa67c'],
    ['Stop', 715, 690, 45, '#f45a5a', 'url(#stopFill)', '#c04848']].forEach(function (o) {
    var y = o[1] + 0.5;
    line('orders', 'M0 ' + y + 'H1690', { stroke: o[4], 'stroke-dasharray': '3 3' });
    line('orders', 'M1692 ' + y + 'H1840', { stroke: o[4], 'stroke-dasharray': '10 5 3 5' });
    line('orders', 'M17.5 ' + (o[2] + 18) + 'V' + o[1], { stroke: o[4] });
    add('orders', 'circle', { cx: 17, cy: y, r: 1.5, fill: '#fff', stroke: o[4] });
    add('orders', 'circle', { cx: 1690, cy: y, r: 1.5, fill: '#fff', stroke: o[4] });
    add('orders', 'rect', { x: 18, y: o[2] + 1, width: o[3], height: 18, fill: '#d8d8d8' });
    add('orders', 'rect', { x: 17, y: o[2], width: o[3], height: 18, fill: o[5] });
    add('orders', 'rect', { x: 17, y: o[2], width: 10, height: 18, fill: '#4040c0' });
    add('orders', 'text', { x: 32, y: o[2] + 13, fill: o[6] }, o[0]);
  });
}

function drawAxes() {
  var i, x, y, d;

  line('frame', 'M0 98.5H1840.500V939.500H0', { 'class': 'grid' });
  line('frame', 'M0 99.5H1839.500M0 940.500H1841', { stroke: '#dfe3ea' });
  line('frame', 'M1912.500 68V976', { 'class': 'edge' });
  line('axes', 'M0 86.5H1854.500V952.500H0', { 'class': 'axis' });

  // session starts
  var sessions = [14, 36, 58, 80, 103, 125, 146, 169, 192, 214, 236, 257, 281, 303, 325, 347, 369, 392, 414, 436, 458, 480, 499, 521, 544,
    566, 587, 610, 632, 655, 677, 698, 721, 744, 766, 788, 809, 833, 855, 877, 899, 921, 944, 966, 988, 1010, 1032, 1055, 1077, 1099, 1122,
    1143, 1166, 1188, 1210, 1233, 1247, 1270, 1292, 1314, 1336, 1358, 1381, 1403, 1425, 1448, 1470, 1492, 1514, 1536, 1559, 1580, 1603,
    1625, 1648, 1670, 1691, 1714, 1737, 1759, 1781, 1803, 1825, 1848];
  var weekends = [36, 146, 257, 480, 587, 698, 809, 1032, 1143, 1358, 1470, 1580, 1691];
  var labels = { 36: '23.01', 80: '25.01', 125: '27.01', 192: 'Feb', 236: '03.02', 281: '07.02', 325: '09.02', 369: '13.02', 414: '15.02',
    458: '17.02', 521: '22.02', 566: '24.02', 610: '28.02', 655: 'Mar', 698: '04.03', 744: '07.03', 788: '09.03', 833: '13.03', 877: '15.03',
    921: '19.03', 966: '21.03', 1010: '23.03', 1055: '27.03', 1099: '29.03', 1143: 'Apr', 1188: '04.04', 1233: '06.04', 1292: '11.04',
    1336: '13.04', 1381: '17.04', 1425: '19.04', 1470: '23.04', 1514: '25.04', 1559: '27.04', 1603: 'May', 1648: '03.05', 1691: '07.05' };
  var ticks = 'M3.500 86V92M8.500 86V92';
  var long = '';
  var grid = '';
  sessions.forEach(function (s, n) {
    var next = sessions[n + 1];
    var parts = Math.max(1, Math.round((next - s) / 5.6));
    for (i = 1; next && i < parts; i++) {
      ticks += 'M' + (Math.round(s + i * (next - s) / parts) + 0.5) + ' 86V92';
    }
    if (s < 1700) {
      var w = labels[s] ? 5 : 4;
      if (weekends.indexOf(s) > -1) {
        w = 6;
      }
      add('axes', 'path', { 'class': 'session', d: 'M' + (s + 0.5 - w) + ' 87h' + (2 * w) + 'L' + (s + 2) + ' 97h-3z' });
      line('axes', 'M' + (s + 0.5) + ' 87V96', { stroke: '#e08c10' });
      long += 'M' + (s + 0.5) + ' 95V99';
      if (w === 6) {
        long += 'M' + (s - 1.5) + ' 95V99';
      }
    } else {
      long += 'M' + (s + 0.5) + ' 86V99';
    }
    grid += 'M' + (s + 0.5) + ' 99V102';
    if (labels[s]) {
      add('axes', 'text', { 'class': 'axis-label middle', x: s - 1, y: 81 }, labels[s]);
    }
  });
  line('axes', ticks + long, { 'class': 'axis' });

  // prices
  d = '';
  for (i = -4; i <= 57; i++) {
    y = Math.round(874 - i * 13.4) + 0.5;
    if (y > 105) {
      d += 'M' + (i % 10 === 0 ? 1840 : i % 5 === 0 ? 1847 : 1850) + ' ' + y + 'H1854';
    }
  }
  ['1.300,0', '1.325,0', '1.350,0', '1.375,0', '1.400,0', '1.425,0'].forEach(function (price, n) {
    add('axes', 'text', { 'class': 'axis-label', x: 1857, y: 879 - n * 134 }, price);
  });
  add('axes', 'rect', { x: 1855, y: 582, width: 45, height: 16, fill: '#66ccff' });
  add('axes', 'text', { x: 1856, y: 594 }, '1.353,1');
  add('axes', 'rect', { x: 1855, y: 705, width: 45, height: 16, fill: '#ff9900' });
  add('axes', 'text', { x: 1856, y: 717 }, '1.330,1');

  // dates
  var dates = ['', '', '02.02 18:00', '09.02 20:00', '16.02 22:00', '24.02 04:00', '02.03 06:00', '09.03 08:00', '16.03 09:00',
    '23.03 11:00', '30.03 14:00', '08.04 00:00', '16.04 02:00', '23.04 04:00', '30.04 06:00', '07.05 08:00', '12.05 10:00'];
  for (i = 0; i < 132; i++) {
    x = Math.round(4 + i * 14.125) + 0.5;
    if (x < 1842) {
      d += 'M' + x + ' 952V' + (i % 8 === 0 ? 940 : i % 2 === 0 ? 946 : 949);
    }
    if (i % 8 === 0 && x < 1842) {
      grid += 'M' + x + ' 937V940';
      if (dates[i / 8]) {
        add('axes', 'text', { 'class': 'axis-label middle', x: x - 1, y: 970 }, dates[i / 8]);
      }
    }
  }
  line('axes', d, { 'class': 'axis' });
  line('frame', grid, { 'class': 'grid' });
  add('axes', 'text', { 'class': 'axis-label', x: -1, y: 970 }, '19.01.2012 08:00');
  add('axes', 'rect', { x: 198, y: 957, width: 104, height: 16, fill: '#ff9900' });
  add('axes', 'text', { x: 200, y: 969 }, '03.02.2012 14:00');
}

drawBars();
drawAverages();
drawPivots();
drawOrders();
drawAxes();
```
